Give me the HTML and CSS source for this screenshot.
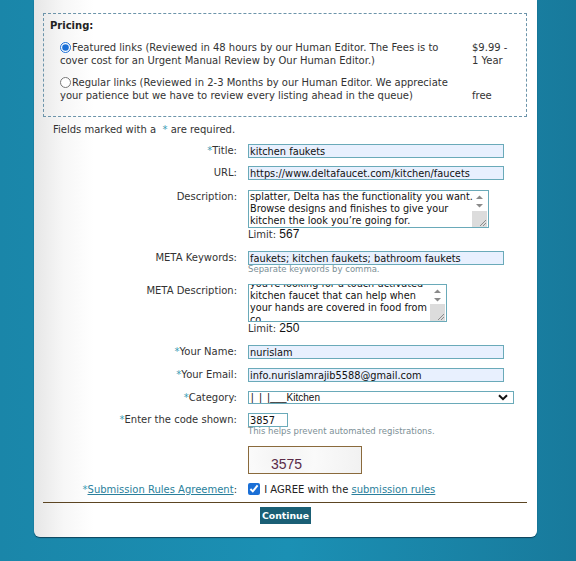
FILE: index.html
```html
<!DOCTYPE html>
<html lang="en">
  <head>
    <meta charset="UTF-8" />
    <title>Submit Link</title>
    <link rel="stylesheet" href="styles.css">
  </head>
  <body>
    <div class="panel">
      <div class="pricing">
        <div class="pricing-title">Pricing:</div>
        <table class="price-table">
          <tr>
            <td class="opt"><input type="radio" name="price" checked>Featured links (Reviewed in 48 hours by our Human Editor. The Fees is to cover cost for an Urgent Manual Review by Our Human Editor.)</td>
            <td class="fee">$9.99 -<br>1 Year</td>
          </tr>
          <tr>
            <td class="opt"><input type="radio" name="price">Regular links (Reviewed in 2-3 Months by our Human Editor. We appreciate your patience but we have to review every listing ahead in the queue)</td>
            <td class="fee">free</td>
          </tr>
        </table>
      </div>

      <p class="note">Fields marked with a &nbsp;<span class="req">*</span> are required.</p>

      <div class="form">
        <div class="row">
          <label><span class="req">*</span>Title:</label>
          <div class="field"><input class="txt wide filled" value="kitchen faukets"></div>
        </div>
        <div class="row m8">
          <label>URL:</label>
          <div class="field"><input class="txt wide filled" value="https://www.deltafaucet.com/kitchen/faucets"></div>
        </div>
        <div class="row m10">
          <label class="top">Description:</label>
          <div class="field">
            <div class="area-wrap desc">
              <textarea class="area" id="desc">Whether you're rinsing fresh produce or washing away
splatter, Delta has the functionality you want. Browse designs and finishes to give your kitchen the look you’re going for.</textarea>
              <svg class="bar" width="17" height="36" viewBox="0 0 17 36">
                <path d="M5 8 L8.5 4.5 L12 8 Z" fill="#8a8a8a"/>
                <path d="M5 13 L8.5 16.5 L12 13 Z" fill="#8a8a8a"/>
                <rect x="1" y="20" width="15" height="16" fill="#dcdcdc"/>
                <path d="M15 29 L9 35 M15 32 L12 35" stroke="#777" stroke-width="0.8"/>
              </svg>
            </div>
            <div class="limit">Limit: <span>567</span></div>
          </div>
        </div>
        <div class="row m10">
          <label>META Keywords:</label>
          <div class="field">
            <input class="txt wide filled" value="faukets; kitchen faukets; bathroom faukets">
            <div class="hint">Separate keywords by comma.</div>
          </div>
        </div>
        <div class="row m10">
          <label class="top">META Description:</label>
          <div class="field">
            <div class="area-wrap meta">
              <textarea class="area" id="meta">Delta faucets. Whether
you're looking for a touch-activated kitchen faucet that can help when your hands are covered in food from co</textarea>
              <svg class="bar" width="17" height="36" viewBox="0 0 17 36">
                <path d="M5 8 L8.5 4.5 L12 8 Z" fill="#8a8a8a"/>
                <path d="M5 13 L8.5 16.5 L12 13 Z" fill="#8a8a8a"/>
                <rect x="1" y="19" width="15" height="17" fill="#dcdcdc"/>
                <path d="M15 29 L9 35 M15 32 L12 35" stroke="#777" stroke-width="0.8"/>
              </svg>
            </div>
            <div class="limit">Limit: <span>250</span></div>
          </div>
        </div>
        <div class="row m10">
          <label><span class="req">*</span>Your Name:</label>
          <div class="field"><input class="txt wide filled" value="nurislam"></div>
        </div>
        <div class="row m9">
          <label><span class="req">*</span>Your Email:</label>
          <div class="field"><input class="txt wide filled" value="info.nurislamrajib5588@gmail.com"></div>
        </div>
        <div class="row m9">
          <label class="sel-label"><span class="req">*</span>Category:</label>
          <div class="field">
            <div class="select-wrap">
              <select class="sel">
                <option>|&nbsp;&nbsp;|&nbsp;&nbsp;|___Kitchen</option>
              </select>
              <svg class="chev" width="10" height="7" viewBox="0 0 10 7"><path d="M1 1.2 L5 5.2 L9 1.2" fill="none" stroke="#111" stroke-width="2"/></svg>
            </div>
          </div>
        </div>
        <div class="row m9">
          <label><span class="req">*</span>Enter the code shown:</label>
          <div class="field">
            <input class="txt code" value="3857">
            <div class="hint">This helps prevent automated registrations.</div>
            <div class="captcha"><span>3575</span></div>
          </div>
        </div>
        <div class="row m9">
          <label class="agree-label"><span class="req">*</span><a href="#">Submission Rules Agreement</a>:</label>
          <div class="field agree">
            <input type="checkbox" checked> I AGREE with the <a href="#">submission rules</a>
          </div>
        </div>
      </div>

      <hr class="sep">

      <div class="actions">
        <button class="btn">Continue</button>
      </div>
    </div>

    <script>
      const desc = document.getElementById('desc')
      const meta = document.getElementById('meta')
      desc.scrollTop = desc.scrollHeight
      meta.scrollTop = 12 + 7
    </script>
  </body>
</html>
```

FILE: styles.css
```css
html,
body {
  margin: 0;
  height: 100%;
}

body {
  background: linear-gradient(90deg, #1a86a9 0%, #1b90b4 50%, #187a9c 100%);
  font-family: "DejaVu Sans", Verdana, sans-serif;
  font-size: 10px;
  color: #222;
  overflow: hidden;
}

.panel {
  margin-left: 34px;
  width: 503px;
  height: 537px;
  box-sizing: border-box;
  padding: 13px 10px 0 9px;
  background: linear-gradient(90deg, #e6e6e6 0px, #f7f7f7 30px, #fff 60px);
  border-radius: 0 0 6px 6px;
  box-shadow: 0 1px 1px rgba(10, 40, 60, 0.7);
}

/* pricing box */
.pricing {
  border: 1px dashed #6c94aa;
  height: 104px;
  box-sizing: border-box;
  padding: 6px 6px 0 6px;
}

.pricing-title {
  font-weight: bold;
  line-height: 12px;
  margin-bottom: 9px;
}

.price-table {
  border-collapse: collapse;
  margin-left: 10px;
}

.price-table td {
  padding: 0 0 9px 0;
  line-height: 13px;
  color: #333;
}

.price-table .opt {
  width: 400px;
  padding-right: 12px;
}

.price-table .fee {
  vertical-align: bottom;
}

.price-table input {
  margin: 0 1px 0 0;
  width: 11px;
  height: 11px;
  vertical-align: -2px;
  accent-color: #1a6fd6;
}

.note {
  margin: 7px 0 0 10px;
  line-height: 12px;
  color: #333;
}

.req {
  color: #3a9cb5;
}

/* form rows */
.form {
  margin-top: 8px;
}

.row {
  display: grid;
  grid-template-columns: 194px 1fr;
  column-gap: 11px;
}

.row.m8 {
  margin-top: 8px;
}

.row.m9 {
  margin-top: 9px;
}

.row.m10 {
  margin-top: 10px;
}

.row label {
  text-align: right;
  line-height: 14px;
  color: #333;
}

.row label.top {
  line-height: 13px;
}

.row label.sel-label {
  line-height: 13px;
}

.row label.agree-label {
  line-height: 13px;
}

.txt {
  display: block;
  box-sizing: border-box;
  height: 14px;
  margin: 0;
  padding: 0 1px;
  border: 1px solid #6aaab9;
  font-family: "DejaVu Sans", Verdana, sans-serif;
  font-size: 9.8px;
  color: #111;
  background: #fff;
  outline: none;
}

.txt.wide {
  width: 256px;
}

.txt.filled {
  background: #e8f0fe;
}

.txt.code {
  width: 40px;
}

/* textareas with drawn scrollbar */
.area-wrap {
  position: relative;
  height: 38px;
}

.area-wrap.desc {
  width: 241px;
}

.area-wrap.meta {
  width: 199px;
}

.area {
  display: block;
  width: 100%;
  height: 38px;
  box-sizing: border-box;
  margin: 0;
  padding: 0 17px 0 1px;
  border: 1px solid #6aaab9;
  font-family: "DejaVu Sans", Verdana, sans-serif;
  font-size: 9.7px;
  line-height: 12px;
  color: #111;
  background: #fff;
  overflow: hidden;
  resize: none;
  outline: none;
}

.desc .area {
  padding-right: 13px;
}

.bar {
  position: absolute;
  right: 1px;
  top: 1px;
}

.limit {
  line-height: 13px;
  color: #333;
}

.limit span {
  font-family: "Liberation Sans", Arial, sans-serif;
  font-size: 12px;
  color: #111;
}

.hint {
  font-size: 8.5px;
  line-height: 9px;
  color: #7c8f96;
}

.select-wrap {
  position: relative;
  width: 266px;
}

.sel {
  display: block;
  width: 266px;
  height: 13px;
  box-sizing: border-box;
  margin: 0;
  padding: 0 2px;
  border: 1px solid #6aaab9;
  background: #fff;
  font-family: "Liberation Sans", Arial, sans-serif;
  font-size: 10px;
  line-height: 11px;
  color: #111;
  appearance: none;
  border-radius: 0;
}

.chev {
  position: absolute;
  right: 6px;
  top: 3px;
}

.captcha {
  width: 114px;
  height: 28px;
  margin-top: 10px;
  box-sizing: border-box;
  border: 1px solid #8a6a3c;
  background: radial-gradient(circle at 30% 40%, #f3f3f3 0, #fafafa 40%, #f1f1f1 100%);
  padding: 10px 0 0 22px;
}

.captcha span {
  font-family: "Liberation Sans", Arial, sans-serif;
  font-size: 14px;
  line-height: 14px;
  color: #5a2a48;
}

.agree {
  line-height: 13px;
  color: #222;
}

.agree input {
  margin: 0 1px 0 0;
  width: 12px;
  height: 12px;
  vertical-align: -2px;
  accent-color: #1a6fd6;
}

a {
  color: #2a7f9c;
}

.sep {
  margin: 6px 0 0 0;
  border: 0;
  border-top: 1px solid #5c4522;
}

.actions {
  padding: 4px 0 0 217px;
}

.btn {
  display: block;
  height: 17px;
  padding: 0 2px;
  border: 0;
  background: #1a5f75;
  color: #fff;
  font-family: "DejaVu Sans", Verdana, sans-serif;
  font-weight: bold;
  font-size: 9.3px;
}
```
